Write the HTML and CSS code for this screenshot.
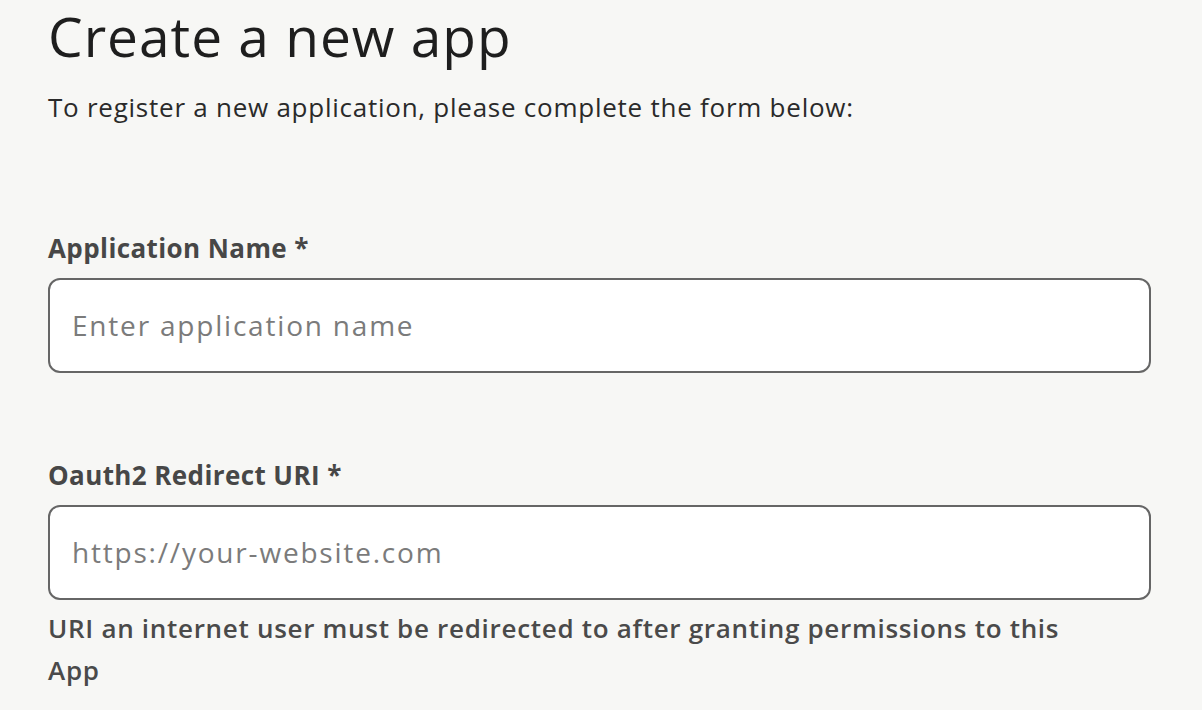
FILE: index.html
```html
<!DOCTYPE html>
<html lang="en">
<head>
<meta charset="utf-8">
<title>Create a new app</title>
<link rel="stylesheet" href="styles.css">
</head>
<body>
<main class="page">
  <h1 class="title">Create a new app</h1>
  <p class="intro">To register a new application, please complete the form below:</p>
  <form class="form">
    <div class="field">
      <label class="label" for="app-name">Application Name *</label>
      <input class="input" id="app-name" type="text" placeholder="Enter application name">
    </div>
    <div class="field">
      <label class="label" for="redirect">Oauth2 Redirect URI *</label>
      <input class="input" id="redirect" type="text" placeholder="https://your-website.com">
      <p class="help">URI an internet user must be redirected to after granting permissions to this App</p>
    </div>
  </form>
</main>
</body>
</html>
```
FILE: styles.css
```css
* { box-sizing: border-box; }
html, body { margin: 0; padding: 0; }
body {
  background: #f7f7f5;
  font-family: "Open Sans", "Noto Sans", sans-serif;
  color: #222;
}
.page {
  padding: 0 51px 0 48px;
}
.title {
  margin: 0;
  padding-top: 4px;
  font-size: 55px;
  line-height: 64px;
  font-weight: 400;
  letter-spacing: 1px;
  color: #1e1e1e;
}
.intro {
  margin: 21px 0 0;
  font-size: 26px;
  line-height: 36px;
  letter-spacing: 0.75px;
  color: #2a2a2a;
}
.form {
  display: flex;
  flex-direction: column;
  gap: 84px;
  padding-top: 105px;
}
.field {
  display: flex;
  flex-direction: column;
}
.label {
  font-size: 26px;
  line-height: 36px;
  font-weight: 700;
  letter-spacing: 0.4px;
  color: #474747;
  margin-bottom: 12px;
}
.input {
  width: 100%;
  height: 95px;
  border: 2px solid #666;
  border-radius: 12px;
  background: #fff;
  padding: 0 22px 1px;
  font-family: inherit;
  font-size: 28px;
  letter-spacing: 1.8px;
  color: #222;
  outline: none;
}
.input::placeholder { color: #7b7b7b; }
.help {
  margin: 7px 0 0;
  font-size: 26px;
  line-height: 42px;
  font-weight: 600;
  letter-spacing: 0.7px;
  color: #4a4a4a;
  max-width: 1040px;
}
```
